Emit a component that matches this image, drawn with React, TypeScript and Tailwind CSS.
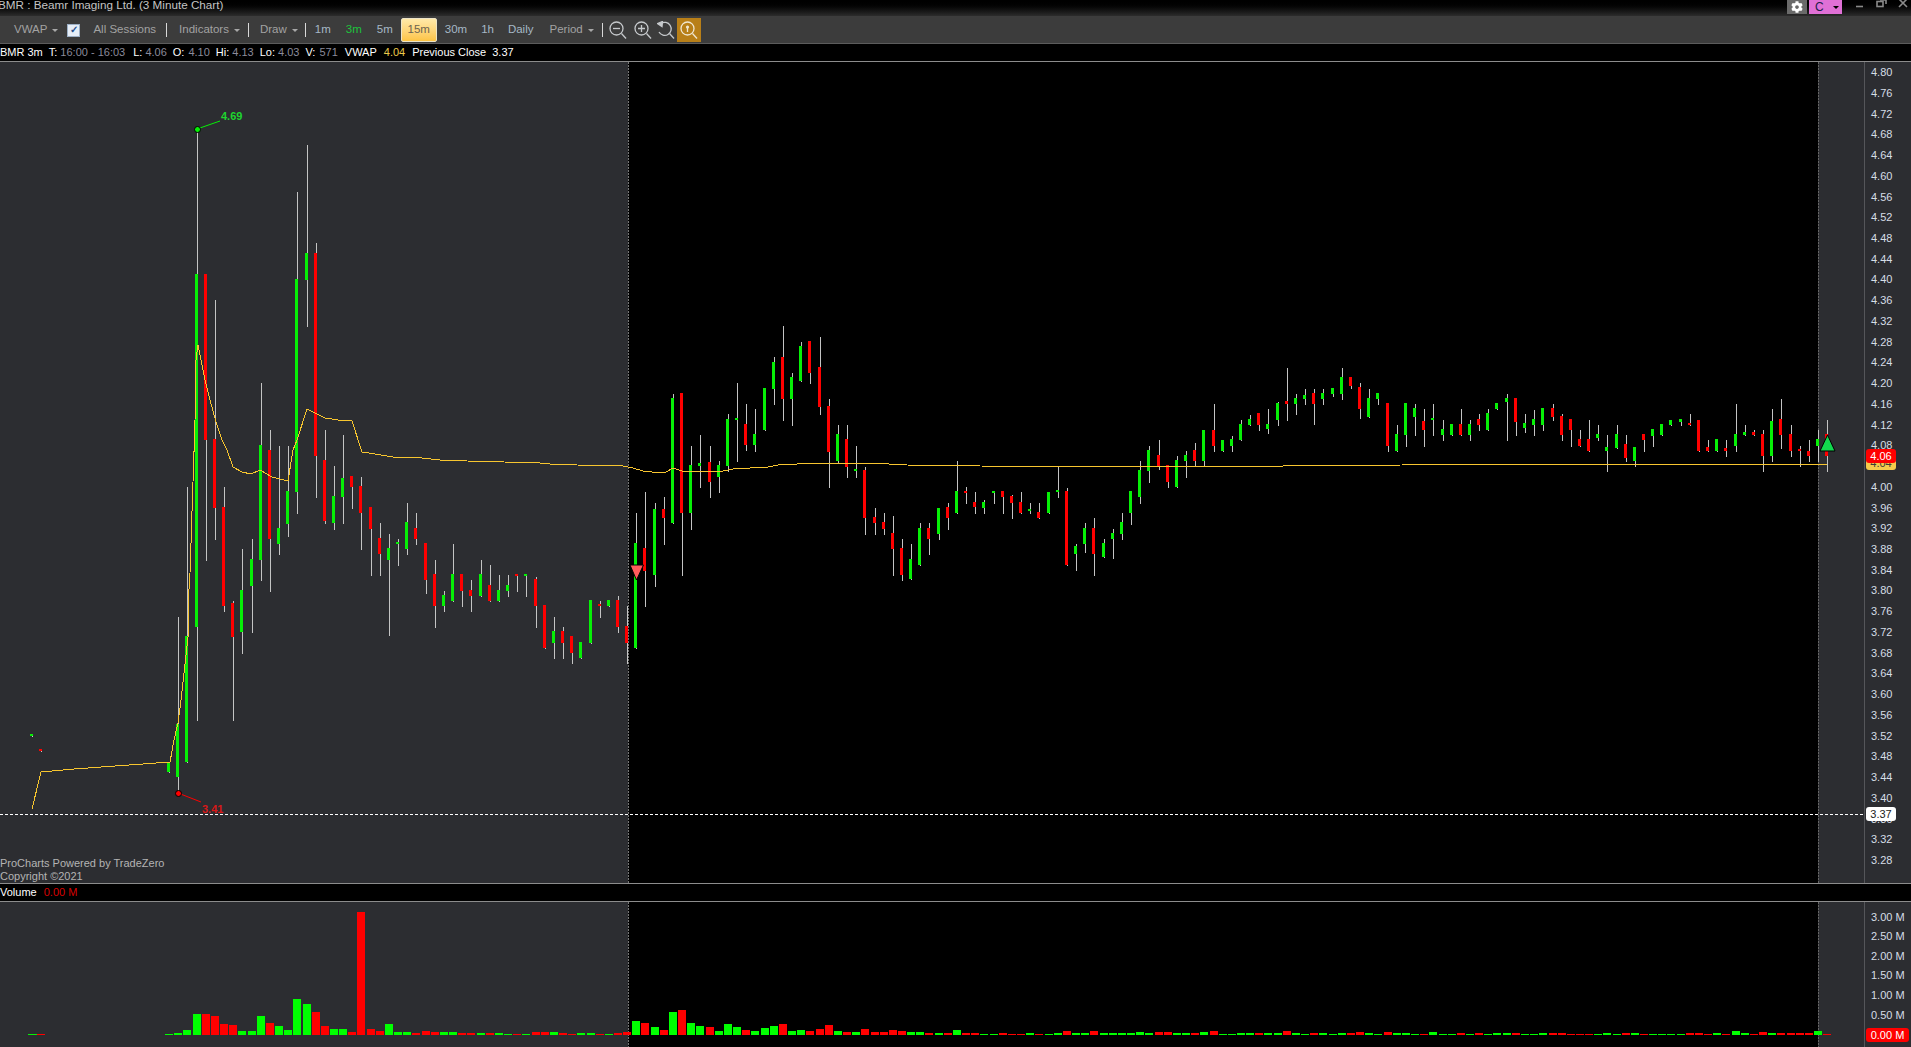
import React from "react";
import { FaCog } from "react-icons/fa";

// x, body top, body bottom, wick top, wick bottom, colour, volume bar height
type Bar = [number, number, number, number, number, "g" | "r", number];

const bars: Bar[] = [
  [167, 762, 772, 762, 773, "g", 1],
  [176, 724, 777, 617, 793, "g", 2],
  [185, 636, 762, 487, 763, "g", 5],
  [195, 274, 627, 129, 721, "g", 21],
  [204, 274, 440, 274, 561, "r", 21],
  [213, 439, 508, 300, 540, "r", 19],
  [222, 507, 606, 487, 612, "r", 11],
  [231, 603, 637, 601, 721, "r", 10],
  [240, 590, 632, 549, 654, "g", 4],
  [250, 559, 586, 539, 633, "g", 4],
  [259, 445, 560, 383, 581, "g", 19],
  [268, 450, 539, 430, 592, "r", 12],
  [277, 528, 544, 446, 555, "g", 9],
  [286, 491, 524, 446, 537, "g", 5],
  [295, 279, 492, 192, 514, "g", 36],
  [305, 253, 280, 145, 327, "g", 31],
  [314, 253, 456, 243, 498, "r", 23],
  [323, 460, 521, 430, 524, "r", 9],
  [332, 496, 523, 466, 530, "g", 6],
  [341, 478, 497, 435, 524, "g", 6],
  [350, 476, 487, 476, 509, "r", 3],
  [359, 486, 513, 477, 550, "r", 123],
  [369, 507, 529, 507, 576, "r", 6],
  [378, 538, 554, 523, 576, "r", 4],
  [387, 548, 560, 534, 636, "g", 11],
  [396, 542, 544, 539, 566, "g", 3],
  [405, 522, 549, 503, 555, "g", 3],
  [414, 528, 539, 513, 545, "r", 2],
  [424, 543, 580, 543, 594, "r", 4],
  [433, 574, 606, 560, 628, "r", 3],
  [442, 595, 606, 591, 612, "g", 3],
  [451, 574, 601, 544, 602, "g", 3],
  [460, 574, 591, 574, 607, "r", 2],
  [469, 590, 596, 580, 612, "r", 2],
  [479, 574, 596, 560, 597, "g", 2],
  [488, 585, 601, 565, 602, "r", 2],
  [497, 590, 601, 575, 602, "g", 2],
  [506, 585, 591, 575, 597, "g", 1],
  [515, 574, 576, 574, 592, "r", 1],
  [524, 574, 576, 574, 597, "g", 1],
  [534, 579, 606, 577, 628, "r", 3],
  [543, 605, 648, 605, 649, "r", 3],
  [552, 631, 643, 617, 659, "g", 3],
  [561, 631, 643, 627, 659, "r", 2],
  [570, 636, 653, 636, 664, "r", 1],
  [579, 642, 658, 642, 659, "g", 2],
  [589, 600, 643, 600, 644, "g", 2],
  [598, 604, 606, 601, 618, "r", 1],
  [607, 600, 606, 600, 607, "g", 1],
  [616, 600, 627, 596, 633, "r", 2],
  [625, 626, 643, 606, 664, "r", 3],
  [634, 543, 648, 513, 649, "g", 14],
  [643, 548, 571, 492, 607, "r", 12],
  [653, 509, 575, 503, 587, "g", 8],
  [662, 509, 518, 497, 545, "r", 5],
  [671, 398, 523, 394, 524, "g", 23],
  [680, 393, 513, 393, 576, "r", 25],
  [689, 465, 513, 446, 530, "g", 12],
  [698, 463, 466, 435, 488, "g", 9],
  [708, 462, 482, 446, 498, "r", 8],
  [717, 465, 477, 461, 493, "g", 4],
  [726, 419, 466, 414, 472, "g", 11],
  [735, 418, 420, 383, 462, "g", 8],
  [744, 424, 445, 404, 451, "r", 5],
  [753, 434, 445, 409, 452, "g", 4],
  [763, 388, 430, 388, 431, "g", 7],
  [772, 362, 389, 357, 405, "g", 9],
  [781, 357, 399, 326, 421, "r", 11],
  [790, 377, 399, 373, 426, "g", 4],
  [799, 346, 381, 342, 382, "g", 5],
  [808, 341, 373, 341, 384, "r", 4],
  [818, 367, 407, 337, 415, "r", 6],
  [827, 406, 452, 399, 488, "r", 10],
  [836, 434, 461, 425, 463, "g", 4],
  [845, 439, 467, 425, 478, "r", 3],
  [854, 469, 471, 446, 478, "g", 3],
  [863, 470, 518, 467, 535, "r", 6],
  [873, 517, 523, 508, 535, "r", 3],
  [882, 522, 529, 513, 535, "r", 3],
  [891, 533, 549, 516, 576, "r", 5],
  [900, 548, 575, 539, 581, "r", 4],
  [909, 559, 579, 544, 580, "g", 3],
  [918, 528, 565, 523, 566, "g", 3],
  [927, 528, 539, 523, 555, "r", 2],
  [937, 508, 534, 508, 540, "g", 2],
  [946, 507, 518, 503, 530, "r", 2],
  [955, 491, 513, 461, 514, "g", 5],
  [964, 491, 493, 487, 504, "r", 2],
  [973, 502, 507, 492, 514, "r", 2],
  [982, 502, 508, 500, 514, "g", 1],
  [992, 491, 493, 491, 504, "g", 1],
  [1001, 491, 497, 491, 514, "r", 2],
  [1010, 496, 503, 495, 519, "r", 1],
  [1019, 502, 513, 492, 514, "r", 1],
  [1028, 509, 511, 503, 514, "g", 2],
  [1037, 512, 518, 503, 519, "r", 1],
  [1047, 492, 513, 492, 514, "g", 1],
  [1056, 490, 492, 466, 498, "g", 2],
  [1065, 491, 565, 488, 566, "r", 4],
  [1074, 546, 554, 544, 571, "g", 2],
  [1083, 528, 544, 523, 553, "g", 2],
  [1092, 528, 554, 518, 576, "r", 4],
  [1102, 543, 557, 539, 558, "g", 2],
  [1111, 533, 539, 529, 559, "g", 2],
  [1120, 522, 534, 513, 540, "g", 2],
  [1129, 491, 513, 491, 525, "g", 2],
  [1138, 470, 497, 461, 504, "g", 3],
  [1147, 450, 471, 446, 483, "g", 2],
  [1157, 455, 466, 440, 470, "r", 3],
  [1166, 465, 482, 465, 488, "r", 3],
  [1175, 460, 487, 456, 488, "g", 2],
  [1184, 455, 461, 451, 478, "g", 2],
  [1193, 450, 461, 443, 467, "r", 2],
  [1202, 430, 461, 430, 467, "g", 3],
  [1212, 430, 446, 404, 452, "r", 4],
  [1221, 440, 451, 440, 452, "g", 1],
  [1230, 439, 446, 436, 452, "g", 1],
  [1239, 424, 440, 420, 441, "g", 2],
  [1248, 419, 425, 415, 426, "g", 2],
  [1257, 413, 425, 413, 431, "r", 2],
  [1266, 424, 429, 409, 434, "g", 2],
  [1276, 403, 420, 402, 426, "g", 2],
  [1285, 401, 404, 368, 421, "r", 4],
  [1294, 398, 404, 394, 415, "g", 2],
  [1303, 395, 399, 389, 405, "g", 1],
  [1312, 393, 404, 389, 425, "r", 2],
  [1321, 393, 399, 389, 405, "g", 2],
  [1331, 388, 394, 388, 397, "g", 1],
  [1340, 377, 394, 368, 400, "g", 2],
  [1349, 377, 386, 377, 389, "r", 2],
  [1358, 387, 409, 383, 419, "r", 3],
  [1367, 398, 417, 389, 418, "g", 2],
  [1376, 393, 399, 393, 405, "g", 1],
  [1386, 403, 446, 403, 452, "r", 3],
  [1395, 434, 451, 425, 452, "g", 2],
  [1404, 403, 435, 403, 447, "g", 2],
  [1413, 408, 417, 404, 436, "g", 1],
  [1422, 421, 430, 409, 447, "r", 1],
  [1431, 418, 420, 404, 436, "g", 3],
  [1441, 429, 435, 420, 441, "g", 1],
  [1450, 424, 435, 424, 436, "g", 1],
  [1459, 424, 435, 409, 436, "r", 2],
  [1468, 424, 435, 420, 441, "g", 1],
  [1477, 419, 425, 414, 431, "r", 2],
  [1486, 413, 430, 409, 431, "g", 1],
  [1495, 403, 409, 403, 410, "g", 2],
  [1505, 398, 402, 394, 441, "g", 2],
  [1514, 398, 422, 398, 436, "r", 2],
  [1523, 423, 428, 414, 433, "g", 1],
  [1532, 419, 425, 410, 436, "g", 1],
  [1541, 408, 425, 408, 431, "g", 2],
  [1551, 408, 417, 404, 421, "r", 2],
  [1560, 416, 435, 414, 441, "r", 2],
  [1569, 419, 430, 419, 447, "r", 1],
  [1578, 439, 446, 430, 447, "r", 1],
  [1587, 439, 451, 420, 452, "r", 1],
  [1596, 434, 438, 425, 441, "g", 1],
  [1605, 447, 451, 435, 472, "g", 2],
  [1615, 434, 448, 425, 449, "g", 1],
  [1624, 444, 458, 435, 462, "r", 2],
  [1633, 447, 461, 447, 467, "g", 2],
  [1642, 434, 440, 434, 452, "r", 1],
  [1651, 429, 436, 429, 447, "g", 1],
  [1660, 424, 435, 424, 436, "g", 1],
  [1669, 420, 425, 420, 426, "g", 1],
  [1679, 419, 422, 419, 426, "g", 1],
  [1688, 423, 425, 414, 426, "r", 2],
  [1697, 420, 451, 420, 452, "r", 2],
  [1706, 447, 451, 440, 452, "r", 1],
  [1715, 439, 451, 439, 452, "g", 2],
  [1724, 448, 451, 440, 457, "r", 1],
  [1734, 434, 446, 404, 452, "g", 4],
  [1743, 432, 435, 425, 436, "g", 2],
  [1752, 432, 435, 430, 436, "r", 1],
  [1761, 434, 456, 430, 472, "r", 3],
  [1770, 421, 456, 409, 462, "g", 2],
  [1779, 419, 435, 399, 449, "r", 2],
  [1789, 434, 451, 425, 457, "r", 2],
  [1798, 449, 451, 446, 467, "r", 2],
  [1807, 451, 456, 440, 462, "r", 2],
  [1816, 439, 446, 430, 462, "g", 4],
  [1825, 434, 456, 420, 472, "r", 1],
];

const vwap =
  "32,809 41,772 74,769 170,762 174,740 178,723 181,700 184,673 186,655 188,637 188,605 190,573 191,543 192,512 193,482 194,452 195,420 196,360 198,345 205,380 210,400 216,422 222,440 227,450 233,467 242,472 251,474 260,470 272,477 288,481 293,450 297,440 307,409 325,418 338,420 352,421 362,452 375,454 393,457 422,458 440,460 467,461 504,462 540,463 550,464 577,465 623,466 633,468 643,471 652,472 666,472 673,468 682,471 705,471 723,471 733,469 750,468 768,467 778,465 797,464 806,463 860,463 889,464 907,465 980,466 1090,467 1283,466 1402,465 1778,464 1827,464";

const GREEN = "#06f006";
const RED = "#ff0000";

const priceLabels = Array.from({ length: 39 }, (_, i) => (4.8 - i * 0.04).toFixed(2));
const volumeLabels = ["3.00 M", "2.50 M", "2.00 M", "1.50 M", "1.00 M", "0.50 M"];

const Arrow = ({ color = "#a8a8a8" }: { color?: string }) => (
  <span
    className="ml-[5px] h-0 w-0 border-x-[3px] border-t-[3px] border-x-transparent"
    style={{ borderTopColor: color }}
  />
);

const Sep = () => <span className="block h-[14px] w-px bg-[#d8d8d8]" />;

const Lens = ({ children, dark }: { children?: React.ReactNode; dark?: boolean }) => (
  <svg width="18" height="19" viewBox="0 0 18 19" fill="none" stroke={dark ? "#efe6d0" : "#c6c9cc"} strokeWidth="1.3">
    <circle cx="7.5" cy="7.5" r="6.5" />
    <path d="M12.5 12.5 L17 17.5" />
    {children}
  </svg>
);

const Timeframe = ({ label, className }: { label: string; className: string }) => (
  <span className={className}>{label}</span>
);

const Plot = ({ top, height, children }: { top: number; height: number; children: React.ReactNode }) => (
  <svg
    className="absolute inset-0"
    width="1911"
    height={height}
    viewBox={`0 ${top} 1911 ${height}`}
    shapeRendering="crispEdges"
  >
    <line x1="628.5" x2="628.5" y1={top} y2={top + height} stroke="#777" strokeDasharray="2 1" />
    <line x1="1818.5" x2="1818.5" y1={top} y2={top + height} stroke="#666" strokeDasharray="2 1" />
    {children}
  </svg>
);

const Panels = () => (
  <>
    <div className="w-[628px] bg-[#2c2d31]" />
    <div className="flex-1 bg-black" />
    <div className="w-[46px] bg-[#2c2d31]" />
  </>
);

export default function App() {
  return (
    <div className="flex h-[1047px] w-[1911px] flex-col overflow-hidden bg-black font-['Liberation_Sans',Arial,sans-serif] text-[11px] text-[#d6dde6]">
      {/* title bar */}
      <div className="relative flex h-[16px] shrink-0 items-start overflow-hidden bg-gradient-to-b from-[#000000] to-[#2c2c2c]">
        <span className="-ml-[2px] -mt-[3px] text-[11.7px] leading-[16px] whitespace-nowrap text-[#c4c4c4]">
          BMR : Beamr Imaging Ltd. (3 Minute Chart)
        </span>
        <div className="ml-auto flex items-start">
          <div className="flex h-[14px] w-[20px] items-center justify-center bg-[#6a6a6a]">
            <FaCog className="text-[12px] text-white" />
          </div>
          <div className="ml-[2px] flex h-[14px] w-[33px] items-center bg-[#e070d6] pl-[6px] text-[12px] text-[#20204a]">
            <span className="leading-none">C</span>
            <span className="ml-[9px] h-0 w-0 border-x-[3px] border-t-[3px] border-x-transparent border-t-black" />
          </div>
          <svg className="ml-[14px]" width="52" height="14" viewBox="0 0 52 14" fill="none" stroke="#8a8a8a" strokeWidth="1.6">
            <path d="M0 6.5H7" />
            <rect x="21" y="1.5" width="6" height="5" />
            <path d="M24 0H30V4" />
            <path d="M43 -1L51 7M51 -1L43 7" />
          </svg>
          <div className="w-[3px]" />
        </div>
      </div>

      {/* toolbar */}
      <div className="flex h-[28px] shrink-0 items-center border-b border-b-[#5c5c5c] bg-[#3c3c3c] pt-[1px] text-[11.5px] text-[#a2a2a2]">
        <span className="ml-[14px]">VWAP</span>
        <Arrow />
        <span className="ml-[9px] flex h-[13px] w-[13px] items-center justify-center border border-[#9db0c6] bg-[#e6eef8] text-[10px] leading-none font-bold text-[#27508e]">
          ✓
        </span>
        <span className="ml-[13px]">All Sessions</span>
        <span className="ml-[10px]"><Sep /></span>
        <span className="ml-[12px]">Indicators</span>
        <Arrow />
        <span className="ml-[8px]"><Sep /></span>
        <span className="ml-[11px]">Draw</span>
        <Arrow />
        <span className="ml-[7px]"><Sep /></span>
        <Timeframe label="1m" className="ml-[9px] text-[#a6b8c6]" />
        <Timeframe label="3m" className="ml-[15px] text-[#1cc23c]" />
        <Timeframe label="5m" className="ml-[15px] text-[#a6b8c6]" />
        <span className="ml-[8px] flex h-[24px] w-[36px] items-center justify-center rounded-[2px] border border-[#ece4c8] bg-gradient-to-b from-[#ffe9a8] to-[#fdc443] text-[#6b6350]">
          15m
        </span>
        <Timeframe label="30m" className="ml-[8px] text-[#a6b8c6]" />
        <Timeframe label="1h" className="ml-[14px] text-[#a6b8c6]" />
        <Timeframe label="Daily" className="ml-[14px] text-[#a6b8c6]" />
        <span className="ml-[16px]">Period</span>
        <Arrow />
        <span className="ml-[8px]"><Sep /></span>
        <span className="ml-[6px] flex">
          <Lens>
            <path d="M4 7.5H11" />
          </Lens>
        </span>
        <span className="ml-[7px] flex">
          <Lens>
            <path d="M4 7.5H11M7.5 4V11" />
          </Lens>
        </span>
        <span className="ml-[5px] flex">
          <svg width="18" height="19" viewBox="0 0 18 19" fill="none" stroke="#c6c9cc" strokeWidth="1.3">
            <path d="M4 2.5 A6.5 6.5 0 1 1 2 11" />
            <path d="M12.5 12.5 L17 17.5" />
            <path d="M0.5 2.5 L5.5 0.5 L5 5.5 Z" fill="#c6c9cc" />
          </svg>
        </span>
        <span className="ml-[2px] flex h-[24px] w-[24px] items-center justify-center bg-[#b87f18]">
          <Lens dark>
            <circle cx="7.5" cy="6" r="1.6" fill="#efe6d0" stroke="none" />
            <path d="M7.5 7V11" />
          </Lens>
        </span>
      </div>

      {/* quote line */}
      <div className="flex h-[18px] shrink-0 items-center border-b border-b-[#8c8c8c] bg-black whitespace-nowrap text-white">
        <span>BMR 3m</span>
        <span className="ml-[6px]">T:</span>
        <span className="ml-[3px] text-[#8b8b9b]">16:00 - 16:03</span>
        <span className="ml-[8px]">L:</span>
        <span className="ml-[3px] text-[#8b8b9b]">4.06</span>
        <span className="ml-[6px]">O:</span>
        <span className="ml-[4px] text-[#8b8b9b]">4.10</span>
        <span className="ml-[6px]">Hi:</span>
        <span className="ml-[3px] text-[#8b8b9b]">4.13</span>
        <span className="ml-[6px]">Lo:</span>
        <span className="ml-[3px] text-[#8b8b9b]">4.03</span>
        <span className="ml-[6px]">V:</span>
        <span className="ml-[4px] text-[#8b8b9b]">571</span>
        <span className="ml-[7px]">VWAP</span>
        <span className="ml-[7px] text-[#ecc94b]">4.04</span>
        <span className="ml-[7px]">Previous Close</span>
        <span className="ml-[6px]">3.37</span>
      </div>

      {/* price chart */}
      <div className="relative flex flex-1">
        <Panels />
        <div className="relative w-[47px] border-l border-l-[#55565a] bg-[#2c2d31] pl-[6px]">
          {priceLabels.map((p) => (
            <div key={p} className="flex h-[20.74px] items-center">
              {p}
            </div>
          ))}
          <span className="absolute top-[395px] left-[1px] flex h-[13px] w-[30px] items-center justify-center rounded-[3px] bg-[#f5cb4c] text-[#3a3a3a]">
            4.04
          </span>
          <span className="absolute top-[387px] left-[1px] flex h-[14px] w-[30px] items-center justify-center rounded-[3px] bg-[#ff0000] text-white">
            4.06
          </span>
          <span className="absolute top-[745px] left-[1px] flex h-[14px] w-[30px] items-center justify-center rounded-[3px] bg-white text-[#222]">
            3.37
          </span>
        </div>

        <Plot top={62} height={821}>
          <rect x="30" y="734" width="3" height="2" fill={GREEN} />
          <rect x="32" y="736" width="1" height="1" fill="#ccc" />
          <rect x="39" y="749" width="3" height="2" fill={RED} />
          <rect x="41" y="751" width="1" height="1" fill="#ccc" />
          <line x1="0" x2="1864" y1="814.5" y2="814.5" stroke="#fff" strokeDasharray="3 2" />
          {bars.map(([x, , , wt, wb]) => (
            <rect key={x} x={x + 2} y={wt} width="1" height={wb - wt} fill="#c4c4c4" />
          ))}
          {bars.map(([x, top, bot, , , c]) => (
            <rect key={x} x={x} y={top} width="3" height={bot - top} fill={c === "g" ? GREEN : RED} />
          ))}
          <polyline points={vwap} fill="none" stroke="#f7c52f" strokeWidth="1" />
          <g shapeRendering="auto">
            <path d="M197 129L220 121" stroke={GREEN} strokeWidth="1" />
            <circle cx="197.5" cy="129.5" r="3" fill={GREEN} stroke="#000" />
            <path d="M178 793L201 802" stroke={RED} strokeWidth="1" />
            <circle cx="178.5" cy="793.5" r="3" fill={RED} stroke="#000" />
            <path d="M630 565H643.5L636.5 580Z" fill="#ff5c5c" stroke="#000" />
            <path d="M1827.5 435L1835 451H1820Z" fill="#12d84e" stroke="#000" />
          </g>
        </Plot>

        <span className="absolute top-[46px] left-[221px] text-[#1fd52f] font-bold">4.69</span>
        <span className="absolute top-[739px] left-[202px] text-[#d81818] font-bold">3.41</span>
        <div className="absolute bottom-0 left-0 text-[11px] leading-[13px] text-[#b4b4b4]">
          <div>ProCharts Powered by TradeZero</div>
          <div>Copyright ©2021</div>
        </div>
      </div>

      {/* volume header */}
      <div className="flex h-[19px] shrink-0 items-center border-y border-y-[#8c8c8c] bg-black">
        <span className="text-white">Volume</span>
        <span className="ml-[7px] text-[#d80000]">0.00 M</span>
      </div>

      {/* volume chart */}
      <div className="relative flex h-[145px] shrink-0">
        <Panels />
        <div className="relative w-[47px] border-l border-l-[#55565a] bg-[#2c2d31] pt-[5px] pl-[6px]">
          {volumeLabels.map((v) => (
            <div key={v} className="flex h-[19.6px] items-center">
              {v}
            </div>
          ))}
          <span className="absolute top-[126px] left-[1px] flex h-[14px] w-[43px] items-center justify-center rounded-[3px] bg-[#ff0000] text-white">
            0.00 M
          </span>
        </div>
        <Plot top={902} height={145}>
          <rect x="28" y="1034" width="9" height="1" fill={GREEN} />
          <rect x="37" y="1034" width="8" height="1" fill={RED} />
          {bars.map(([x, , , , , c, vol]) => (
            <rect key={x} x={x - 2} y={1035 - vol} width="8" height={vol} fill={c === "g" ? "#00ff00" : RED} />
          ))}
        </Plot>
      </div>
    </div>
  );
}
